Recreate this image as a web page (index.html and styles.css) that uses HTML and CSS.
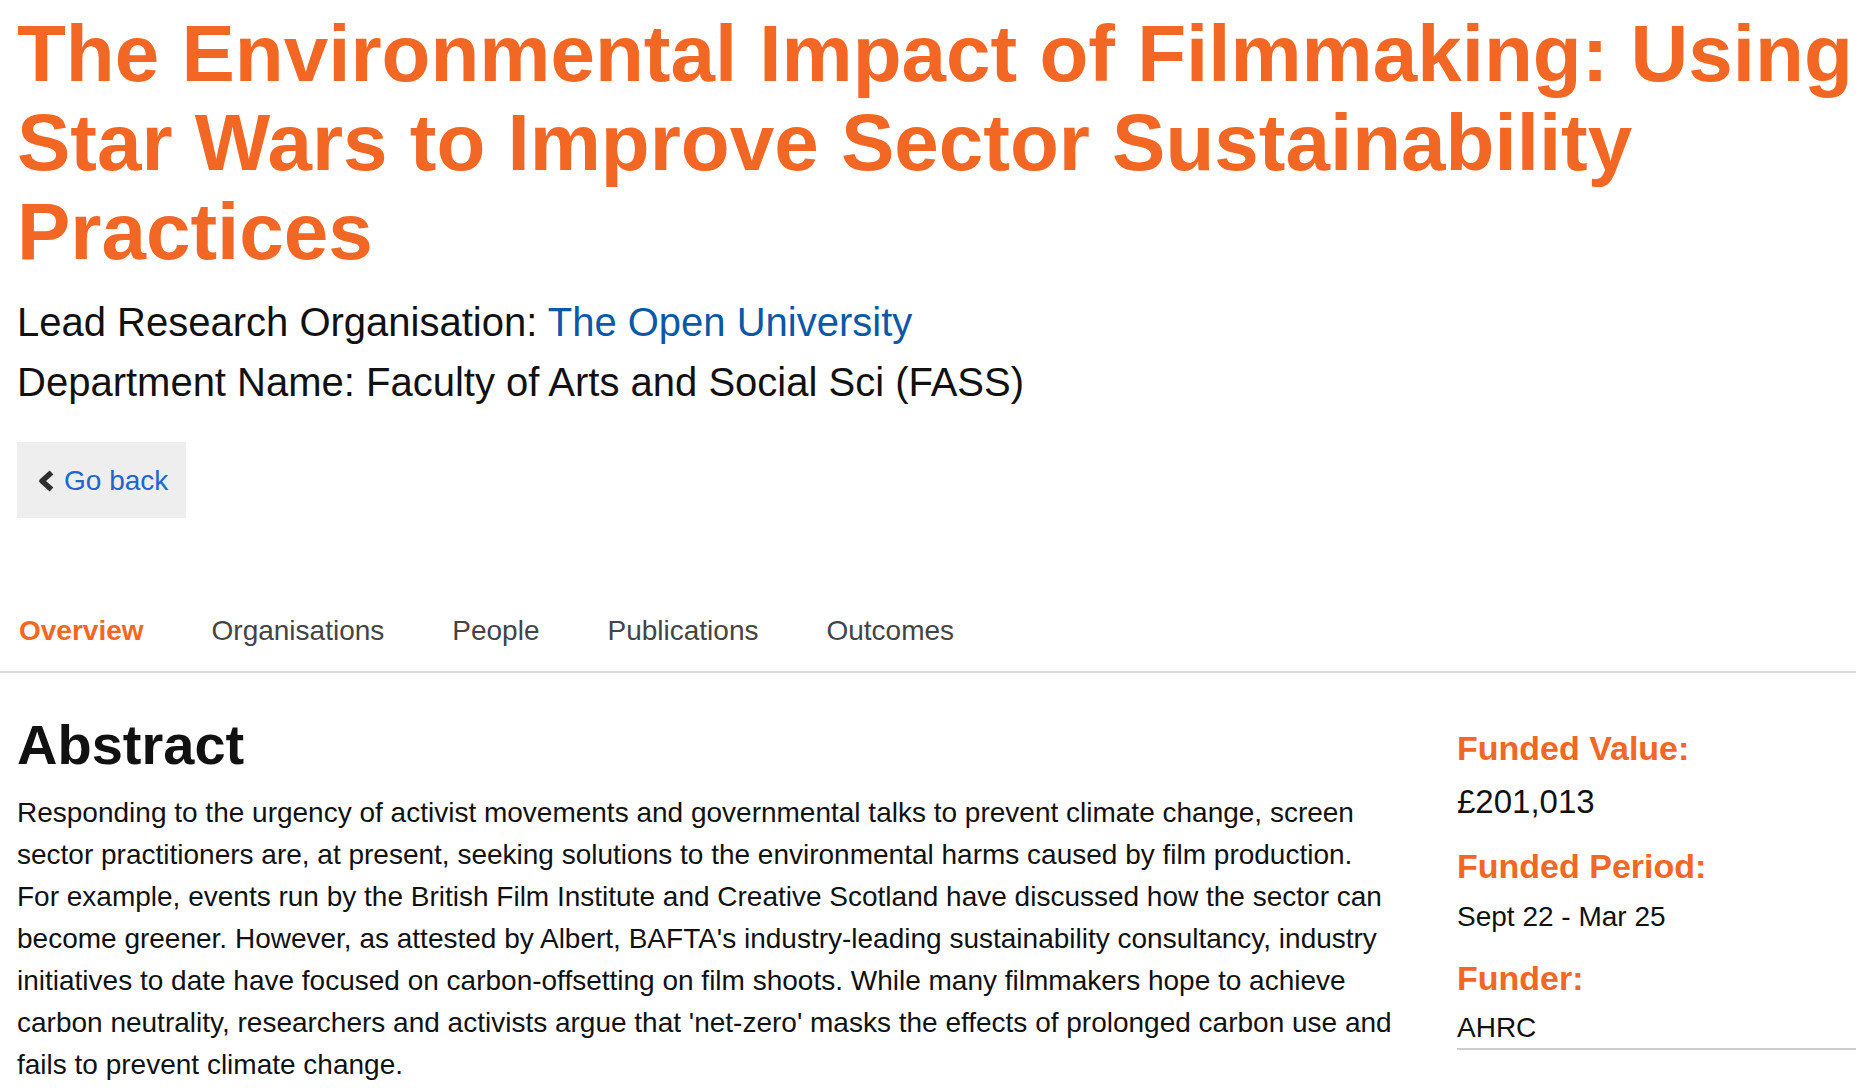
FILE: index.html
```html
<!DOCTYPE html>
<html lang="en">
<head>
<meta charset="utf-8">
<title>The Environmental Impact of Filmmaking</title>
<link rel="stylesheet" href="styles.css">
</head>
<body>
<header class="intro">
  <h1 class="title">The Environmental Impact of Filmmaking: Using Star Wars to Improve Sector Sustainability Practices</h1>
  <p class="meta">Lead Research Organisation: <a class="org-link" href="#">The Open University</a></p>
  <p class="meta">Department Name: Faculty of Arts and Social Sci (FASS)</p>
  <a class="back-btn" href="#">
    <svg class="chev" width="18" height="22" viewBox="0 0 18 22"><path d="M14.5 2.5 L5 11 L14.5 19.5" fill="none" stroke="#2e2e2e" stroke-width="5.5" stroke-linejoin="round" stroke-linecap="butt"/></svg>
    <span class="back-text">Go back</span>
  </a>
</header>
<nav class="tabs">
  <a class="tab active" href="#">Overview</a>
  <a class="tab" href="#">Organisations</a>
  <a class="tab" href="#">People</a>
  <a class="tab" href="#">Publications</a>
  <a class="tab" href="#">Outcomes</a>
</nav>
<main class="content">
  <section class="abstract">
    <h2 class="abstract-title">Abstract</h2>
    <p class="abstract-text">Responding to the urgency of activist movements and governmental talks to prevent climate change, screen sector practitioners are, at present, seeking solutions to the environmental harms caused by film production. For example, events run by the British Film Institute and Creative Scotland have discussed how the sector can become greener. However, as attested by Albert, BAFTA's industry-leading sustainability consultancy, industry initiatives to date have focused on carbon-offsetting on film shoots. While many filmmakers hope to achieve carbon neutrality, researchers and activists argue that 'net-zero' masks the effects of prolonged carbon use and fails to prevent climate change.</p>
  </section>
  <aside class="facts">
    <div class="fact-label">Funded Value:</div>
    <div class="fact-value big">£201,013</div>
    <div class="fact-label period">Funded Period:</div>
    <div class="fact-value">Sept 22 - Mar 25</div>
    <div class="fact-label funder">Funder:</div>
    <div class="fact-value last">AHRC</div>
  </aside>
</main>
</body>
</html>
```

FILE: styles.css
```css
html, body {
  margin: 0;
  padding: 0;
  background: #ffffff;
}
body {
  font-family: "Liberation Sans", Arial, Helvetica, sans-serif;
  color: #111111;
}
.intro {
  padding: 9px 0 0 17px;
}
.title {
  margin: 0;
  font-size: 80px;
  line-height: 89px;
  font-weight: bold;
  color: #f26724;
}
.meta {
  margin: 0;
  font-size: 40px;
  line-height: 60px;
  color: #111111;
}
.intro .title + .meta {
  margin-top: 16px;
}
.org-link {
  color: #0b58a8;
  text-decoration: none;
}
.back-btn {
  display: inline-flex;
  align-items: center;
  margin-top: 30px;
  height: 76px;
  box-sizing: border-box;
  padding: 0 18px 0 20px;
  background: #eeeeee;
  text-decoration: none;
}
.chev {
  display: block;
  margin-top: 1px;
  margin-right: 9px;
}
.back-text {
  font-size: 28px;
  line-height: 32px;
  color: #2264d1;
  margin-top: 1px;
}
.tabs {
  display: flex;
  gap: 68px;
  margin-top: 97px;
  padding: 0 0 24px 19px;
  border-bottom: 2px solid #dddddd;
}
.tab {
  font-size: 28px;
  line-height: 32px;
  color: #444444;
  text-decoration: none;
}
.tab.active {
  color: #f26724;
  font-weight: bold;
}
.content {
  display: grid;
  grid-template-columns: 1fr 399px;
  column-gap: 60px;
  padding-left: 17px;
}
.abstract-title {
  margin: 40px 0 0 0;
  font-size: 56px;
  line-height: 64px;
  font-weight: bold;
  color: #111111;
}
.abstract-text {
  margin: 15px 0 0 0;
  font-size: 28px;
  line-height: 42px;
  color: #111111;
}
.facts {
  padding-top: 55px;
  padding-bottom: 0;
}
.fact-label {
  font-size: 34px;
  line-height: 40px;
  font-weight: bold;
  color: #f26724;
  margin-top: 0;
}
.fact-label.period {
  margin-top: 24px;
}
.fact-label.funder {
  margin-top: 23px;
}
.fact-value {
  font-size: 28px;
  line-height: 36px;
  margin-top: 13px;
  color: #111111;
}
.fact-value.big {
  font-size: 33px;
  line-height: 40px;
  margin-top: 14px;
}
.fact-value.last {
  margin-top: 12px;
  padding-bottom: 2px;
  border-bottom: 2px solid #cccccc;
}
```
